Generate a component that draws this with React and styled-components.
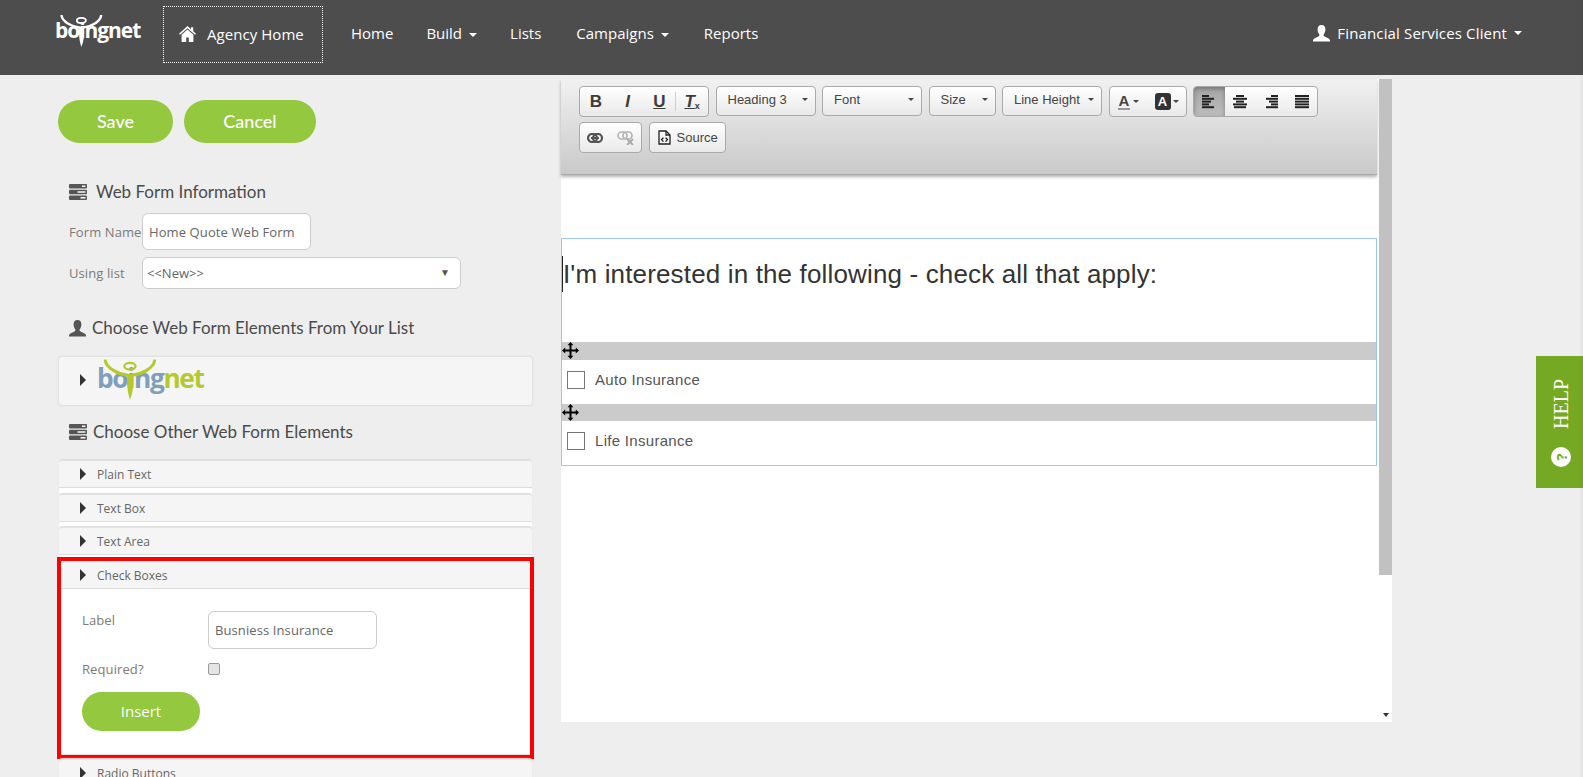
import React from 'react';
import styled, { createGlobalStyle } from 'styled-components';

const GlobalStyle = createGlobalStyle`
  html, body {
    margin: 0;
    padding: 0;
    height: 100%;
    overflow: hidden;
    background: #eeeeee;
    font-family: "Open Sans", "Liberation Sans", sans-serif;
    color: #555;
  }
  * { box-sizing: border-box; }
`;

const HomeIcon = () => (
  <svg width="17" height="16" viewBox="0 0 17 16" fill="#fff">
    <path d="M8.5 0 L12 3.2 V1.2 H14.2 V5.2 L17 7.8 L16 8.8 L8.5 2.2 L1 8.8 L0 7.8 Z" />
    <path d="M8.5 3.6 L14.4 8.8 V16 H9.8 V11.4 H7.2 V16 H2.6 V8.8 Z" />
  </svg>
);

const UserIcon = ({ color = '#fff', size = 17 }) => (
  <svg width={size} height={size} viewBox="0 0 17 17" fill={color}>
    <path d="M8.5 0 C11.2 0 12.5 2 12.4 4.8 C12.3 7 11.4 8.6 10.6 9.6 C10.4 10.6 10.8 11.2 12 11.8 C14.2 12.8 16.4 13.4 17 15.2 V16.4 H0 V15.2 C0.6 13.4 2.8 12.8 5 11.8 C6.2 11.2 6.6 10.6 6.4 9.6 C5.6 8.6 4.7 7 4.6 4.8 C4.5 2 5.8 0 8.5 0 Z" />
  </svg>
);

const ServerIcon = () => (
  <svg width="18" height="16" viewBox="0 0 18 16">
    <rect x="0" y="0" width="18" height="4.4" rx="1" fill="#555" />
    <rect x="0" y="5.8" width="18" height="4.4" rx="1" fill="#555" />
    <rect x="0" y="11.6" width="18" height="4.4" rx="1" fill="#555" />
    <rect x="13" y="1.4" width="3.4" height="1.6" fill="#eee" />
    <rect x="8.5" y="7.2" width="8" height="1.6" fill="#eee" />
    <rect x="11.5" y="13" width="5" height="1.6" fill="#eee" />
  </svg>
);

const MoveIcon = () => (
  <svg width="17" height="17" viewBox="0 0 17 17" fill="#000">
    <path d="M8.5 0 L11.4 3.2 H9.5 V7.5 H13.8 V5.6 L17 8.5 L13.8 11.4 V9.5 H9.5 V13.8 H11.4 L8.5 17 L5.6 13.8 H7.5 V9.5 H3.2 V11.4 L0 8.5 L3.2 5.6 V7.5 H7.5 V3.2 H5.6 Z" />
  </svg>
);

const SwooshIcon = ({ color }) => (
  <svg width="46" height="33" viewBox="0 0 56 40" fill="none">
    <path d="M2 1 C3 8 14 14 23 15" stroke={color} strokeWidth="3" strokeLinecap="round" />
    <path d="M50 1 C49 8 38 14 29 15" stroke={color} strokeWidth="3" strokeLinecap="round" />
    <ellipse cx="26" cy="6.5" rx="5.5" ry="3.2" stroke={color} strokeWidth="2.2" />
    <path d="M23.5 14 L29 14 C30 24 29 32 26 39 C23.5 32 22.5 22 23.5 14 Z" fill={color} />
  </svg>
);

const LinkIcon = ({ color }) => (
  <svg width="16" height="10" viewBox="0 0 16 10" fill="none" stroke={color} strokeWidth="2.2">
    <rect x="1" y="1" width="9" height="8" rx="4" />
    <rect x="6" y="1" width="9" height="8" rx="4" />
    <path d="M4 5 H12" />
  </svg>
);

const UnlinkIcon = () => (
  <svg width="17" height="14" viewBox="0 0 17 14" fill="none" stroke="#b4b4b4" strokeWidth="1.7">
    <rect x="1" y="1" width="9" height="7" rx="3.5" />
    <rect x="6" y="1" width="9" height="7" rx="3.5" />
    <path d="M10 8 L16 14 M16 8 L10 14" stroke="#a8a8a8" strokeWidth="1.8" />
  </svg>
);

const SourceIcon = () => (
  <svg width="13" height="15" viewBox="0 0 13 15" fill="none" stroke="#222" strokeWidth="1.3">
    <path d="M1 1 H8 L12 5 V14 H1 Z" />
    <path d="M8 1 V5 H12" />
    <path d="M5.4 7.6 L3.6 9.6 L5.4 11.6 M7.6 7.6 L9.4 9.6 L7.6 11.6" strokeWidth="1.4" />
  </svg>
);

const AlignIcon = ({ rows }) => (
  <svg width="14" height="14" viewBox="0 0 14 14" fill="#222">
    {rows.map(([x, w], i) => (
      <rect key={i} x={x} y={i * 2.8} width={w} height="2" />
    ))}
  </svg>
);

const Page = styled.div`
  height: 100vh;
  overflow: hidden;
  position: relative;

  &::after {
    content: '';
    position: absolute;
    top: 0;
    right: 0;
    bottom: 0;
    width: 4px;
    background: linear-gradient(to right, rgba(0, 0, 0, 0), rgba(0, 0, 0, 0.05));
  }
`;

const TopBar = styled.header`
  height: 75px;
  background: #4d4d4d;
  display: flex;
  align-items: flex-start;
  padding-left: 55px;
  color: #fff;
  font-size: 15px;
`;

const Logo = styled.div`
  position: relative;
  width: 86px;
  height: 47px;
  margin-top: 13px;
`;

const LogoWord = styled.div`
  position: absolute;
  left: 0;
  top: 2px;
  font: 700 21px/30px "Open Sans", sans-serif;
  letter-spacing: -1.05px;
  color: ${p => p.$color || '#fff'};
  white-space: nowrap;

  span {
    color: ${p => p.$accent || 'inherit'};
  }
`;

const LogoMark = styled.div`
  position: absolute;
  left: 5px;
  top: 2px;
`;

const AgencyHome = styled.a`
  width: 160px;
  height: 57px;
  margin: 6px 28px 0 22px;
  border: 1px dotted #fff;
  display: flex;
  align-items: center;
  padding: 0 0 1px 15px;
  gap: 11px;
  letter-spacing: 0.05px;
`;

const NavItem = styled.a`
  margin-top: 23px;
  line-height: 20px;
  margin-right: ${p => p.$gap}px;
  white-space: nowrap;
`;

const Caret = styled.i`
  display: inline-block;
  flex: none;
  width: 0;
  height: 0;
  margin-left: ${p => p.$gap ?? 7}px;
  vertical-align: middle;
  border-top: ${p => p.$size || 4}px solid ${p => p.$color || '#fff'};
  border-left: ${p => p.$size || 4}px solid transparent;
  border-right: ${p => p.$size || 4}px solid transparent;
`;

const UserMenu = styled.a`
  margin: 23px 61px 0 auto;
  line-height: 20px;
  display: flex;
  align-items: center;
  gap: 7px;
  letter-spacing: 0.15px;
`;

const Main = styled.main`
  display: flex;
  align-items: flex-start;
`;

const Sidebar = styled.aside`
  width: 561px;
  padding: 25px 29px 0 58px;
  flex: none;
`;

const ButtonRow = styled.div`
  display: flex;
  gap: 11px;
  margin-bottom: 38px;
`;

const PillButton = styled.button`
  width: ${p => p.$w}px;
  height: ${p => p.$h || 43}px;
  border: 0;
  border-radius: 22px;
  background: #93c83f;
  color: #fff;
  font: ${p => p.$small ? '500 15px "Open Sans"' : '500 18px Lato'}, sans-serif;
  padding: 0 0 1px;
`;

const SectionTitle = styled.h3`
  margin: 0;
  padding-left: ${p => p.$inset || 11}px;
  display: flex;
  align-items: center;
  gap: ${p => p.$gap || 6}px;
  font: 400 17px/22px Lato, sans-serif;
  color: #4a4a4a;
`;

const InfoRows = styled.div`
  padding: 10px 0 0 11px;
  display: grid;
  grid-template-columns: 73px 1fr;
  row-gap: 7px;
  align-items: center;
  margin-bottom: 28px;
`;

const FieldLabel = styled.label`
  font-size: 13px;
  color: #7b7b7b;
  white-space: nowrap;
  letter-spacing: 0.1px;
`;

const TextField = styled.div`
  width: ${p => p.$w}px;
  height: ${p => p.$h}px;
  background: #fff;
  border: 1px solid #ccc;
  border-radius: 6px;
  padding-left: 6px;
  display: flex;
  align-items: center;
  font-size: 13px;
  letter-spacing: 0.1px;
  color: #666;
`;

const SelectField = styled(TextField)`
  justify-content: space-between;
  padding: 0 10px 0 4px;
  letter-spacing: 0;
  color: #666;

  &::after {
    content: '▼';
    font-size: 10px;
    color: #555;
    margin-top: -3px;
  }
`;

const LogoPanel = styled.div`
  height: 48px;
  margin: 18px 0 16px 1px;
  width: 473px;
  background: #f5f5f5;
  border-radius: 3px;
  box-shadow: 0 0 2px 1px #ddd;
  display: flex;
  align-items: flex-start;
  padding-left: 21px;
`;

const Arrow = styled.i`
  display: block;
  flex: none;
  width: 0;
  height: 0;
  border-left: 6px solid #333;
  border-top: 6px solid transparent;
  border-bottom: 6px solid transparent;
`;

const PanelLogo = styled(Logo)`
  margin: 0 0 0 11px;
  transform: scale(1.25);
  transform-origin: 0 0;
`;

const LogoArrow = styled(Arrow)`
  margin-top: 17px;
`;

const Accordion = styled.div`
  width: 473px;
  margin: 17px 0 0 1px;
  background: #fff;
`;

const AccordionHead = styled.div`
  height: 28px;
  margin-bottom: ${p => p.$mb ?? 5}px;
  background: #f5f5f5;
  border-radius: 3px 3px 0 0;
  border-top: 1px solid #e2e2e2;
  border-bottom: 1px solid #ddd;
  box-shadow: 0 -1px 1px #ddd;
  display: flex;
  align-items: center;
  gap: 11px;
  padding-left: 21px;
  font-size: 12px;
  color: #666;
`;

const Highlight = styled.section`
  margin: 0 -2px;
  border: 4px solid #ff0000;
  background: #fff;
`;

const HighlightHead = styled(AccordionHead)`
  height: 28px;
  margin: 0;
  padding: 1px 0 0 19px;
  border-top: 0;
  box-shadow: none;
  border-radius: 0;
`;

const CheckForm = styled.div`
  padding: 22px 0 0 21px;
  height: 166px;
  display: grid;
  grid-template-columns: 126px 1fr;
  grid-template-rows: 38px auto auto;
  align-content: start;
  border-bottom: 1px solid #ddd;
`;

const CheckLabel = styled(FieldLabel)`
  align-self: ${p => p.$center ? 'center' : 'start'};
  line-height: 18px;
`;

const RequiredRow = styled.div`
  grid-column: 1 / -1;
  display: grid;
  grid-template-columns: 126px 1fr;
  align-items: center;
  margin: 11px 0 14px;
`;

const SmallCheck = styled.span`
  width: 12px;
  height: 12px;
  border: 1px solid #999;
  border-radius: 2px;
  background: #e4e4e4;
`;

const EditorColumn = styled.div`
  width: 831px;
  height: 643px;
  margin-top: 4px;
  position: relative;
  background: #fff;
  padding-right: 15px;
`;

const Toolbar = styled.div`
  height: 96px;
  padding: 7px 18px;
  background: linear-gradient(to bottom, #f1f1f1, #c9c9c9);
  border-bottom: 1px solid #aaa;
  box-shadow: 0 2px 3px rgba(0, 0, 0, 0.3);
  position: relative;
`;

const ToolRow = styled.div`
  display: flex;
  align-items: flex-start;
  gap: 6.5px;
  margin-bottom: 5px;
`;

const ToolGroup = styled.div`
  display: flex;
  height: 31px;
  width: ${p => p.$w}px;
  border: 1px solid #aaa;
  border-radius: 4px;
  background: linear-gradient(to bottom, #fff, #e9e9e9);
  overflow: hidden;
  align-items: center;
`;

const ToolCell = styled.span`
  flex: 1;
  align-self: stretch;
  display: flex;
  align-items: center;
  justify-content: center;
  color: #333;
  background: ${p => p.$active ? 'linear-gradient(to bottom, #a5a5a5, #bdbdbd)' : 'none'};
  box-shadow: ${p => p.$active ? 'inset 0 2px 4px rgba(0,0,0,0.3)' : 'none'};
`;

const FormatGlyph = styled.span`
  font: ${p => p.$italic ? 'italic ' : ''}700 17px/1 "Liberation Sans", sans-serif;
  text-decoration: ${p => p.$underline ? 'underline' : 'none'};
  color: #3c3c3c;

  sub {
    font-size: 9px;
    vertical-align: -2px;
    font-style: normal;
  }
`;

const Divider = styled.i`
  width: 1px;
  height: 19px;
  background: #ccc;
`;

const ToolSelect = styled.div`
  width: ${p => p.$w}px;
  height: 30px;
  border: 1px solid #aaa;
  border-radius: 4px;
  background: linear-gradient(to bottom, #fff, #e9e9e9);
  display: flex;
  align-items: center;
  justify-content: space-between;
  padding: 0 7px 3px 11px;
  font: 13px "Liberation Sans", sans-serif;
  color: #444;
  white-space: nowrap;
`;

const ColorA = styled.span`
  font: 700 15px/1 "Liberation Sans", sans-serif;
  color: #444;
  border-bottom: 2px solid #999;
  padding: 0 1px;
`;

const ColorB = styled.span`
  font: 700 13px/17px "Liberation Sans", sans-serif;
  color: #fff;
  background: #333;
  border-radius: 3px;
  width: 16px;
  text-align: center;
`;

const SourceButton = styled(ToolSelect)`
  justify-content: flex-start;
  height: 31px;
  gap: 6px;
  padding: 0 0 0 8px;
`;

const EditBox = styled.div`
  margin-top: 63px;
  height: 228px;
  border: 1px solid #9dc3fb;
  font: 26px "Liberation Sans", sans-serif;
  letter-spacing: 0.15px;
  color: #333;
`;

const Headline = styled.div`
  height: 103px;
  padding-top: 20px;
  line-height: 30px;
`;

const Caretted = styled.span`
  box-shadow: -1px 0 0 #222;
  margin-left: 1px;
  padding: 3px 0;
`;

const DragBar = styled.div`
  height: ${p => p.$h}px;
  background: #cbcbcb;
  display: flex;
  align-items: center;
  position: relative;
`;

const MoveHandle = styled.span`
  position: absolute;
  left: 0;
  top: 0;
  line-height: 0;
`;

const OptionRow = styled.div`
  height: ${p => p.$h}px;
  display: flex;
  align-items: center;
  gap: 10px;
  padding: 0 0 5px 5px;
  font: 15px "Liberation Sans", sans-serif;
  letter-spacing: 0.3px;
  color: #555;
`;

const Box = styled.span`
  width: 18px;
  height: 18px;
  border: 1px solid #777;
  background: #fff;
`;

const Scrollbar = styled.div`
  position: absolute;
  top: 0;
  right: 0;
  bottom: 0;
  width: 13px;
`;

const ScrollThumb = styled.div`
  height: 496px;
  background: #c1c1c1;
`;

const ScrollArrow = styled.i`
  position: absolute;
  bottom: 5px;
  left: 4px;
  width: 0;
  height: 0;
  border-top: 4px solid #333;
  border-left: 3px solid transparent;
  border-right: 3px solid transparent;
`;

const HelpTab = styled.div`
  position: absolute;
  right: 0;
  top: 356px;
  width: 47px;
  height: 132px;
  background: #76a923;
  display: flex;
  flex-direction: column;
  align-items: center;
  padding: 23px 0 0 3px;
  gap: 18px;
`;

const HelpText = styled.span`
  writing-mode: vertical-rl;
  transform: rotate(180deg);
  font: 20px/20px "Liberation Serif", serif;
  color: #fff;
`;

const HelpDot = styled.span`
  width: 20px;
  height: 20px;
  border-radius: 50%;
  background: #fff;
  color: #76a923;
  font: 700 15px/20px "Open Sans", sans-serif;
  text-align: center;
  transform: rotate(-90deg);
`;

const App = () => {
  return (
    <Page>
      <GlobalStyle />
      <TopBar>
        <Logo>
          <LogoWord>boingnet</LogoWord>
          <LogoMark>
            <SwooshIcon color="#fff" />
          </LogoMark>
        </Logo>
        <AgencyHome>
          <HomeIcon />
          Agency Home
        </AgencyHome>
        <NavItem $gap={33}>Home</NavItem>
        <NavItem $gap={33}>Build<Caret /></NavItem>
        <NavItem $gap={35}>Lists</NavItem>
        <NavItem $gap={35}>Campaigns<Caret /></NavItem>
        <NavItem $gap={0}>Reports</NavItem>
        <UserMenu>
          <UserIcon />
          Financial Services Client<Caret $gap={0} />
        </UserMenu>
      </TopBar>

      <Main>
        <Sidebar>
          <ButtonRow>
            <PillButton $w={115}>Save</PillButton>
            <PillButton $w={132}>Cancel</PillButton>
          </ButtonRow>

          <SectionTitle $gap={9}><ServerIcon />Web Form Information</SectionTitle>
          <InfoRows>
            <FieldLabel>Form Name</FieldLabel>
            <TextField $w={169} $h={37}>Home Quote Web Form</TextField>
            <FieldLabel>Using list</FieldLabel>
            <SelectField $w={319} $h={32}>&lt;&lt;New&gt;&gt;</SelectField>
          </InfoRows>

          <SectionTitle $gap={6}><UserIcon color="#555" />Choose Web Form Elements From Your List</SectionTitle>
          <LogoPanel>
            <LogoArrow />
            <PanelLogo>
              <LogoWord $color="#7f9fba" $accent="#b5c92f">boing<span>net</span></LogoWord>
              <LogoMark>
                <SwooshIcon color="#b5c92f" />
              </LogoMark>
            </PanelLogo>
          </LogoPanel>

          <SectionTitle $gap={6}><ServerIcon />Choose Other Web Form Elements</SectionTitle>
          <Accordion>
            <AccordionHead $mb={6}><Arrow />Plain Text</AccordionHead>
            <AccordionHead><Arrow />Text Box</AccordionHead>
            <AccordionHead $mb={2}><Arrow />Text Area</AccordionHead>
            <Highlight>
              <HighlightHead><Arrow />Check Boxes</HighlightHead>
              <CheckForm>
                <CheckLabel>Label</CheckLabel>
                <TextField $w={169} $h={38}>Busniess Insurance</TextField>
                <RequiredRow>
                  <CheckLabel $center>Required?</CheckLabel>
                  <SmallCheck />
                </RequiredRow>
                <PillButton $w={118} $h={39} $small>Insert</PillButton>
              </CheckForm>
            </Highlight>
            <AccordionHead><Arrow />Radio Buttons</AccordionHead>
          </Accordion>
        </Sidebar>

        <EditorColumn>
          <Toolbar>
            <ToolRow>
              <ToolGroup $w={130}>
                <ToolCell><FormatGlyph>B</FormatGlyph></ToolCell>
                <ToolCell><FormatGlyph $italic>I</FormatGlyph></ToolCell>
                <ToolCell><FormatGlyph $underline>U</FormatGlyph></ToolCell>
                <Divider />
                <ToolCell><FormatGlyph $italic $underline>T<sub>x</sub></FormatGlyph></ToolCell>
              </ToolGroup>
              <ToolSelect $w={100}>Heading 3<Caret $color="#444" $gap={0} $size={3} /></ToolSelect>
              <ToolSelect $w={100}>Font<Caret $color="#444" $gap={0} $size={3} /></ToolSelect>
              <ToolSelect $w={67}>Size<Caret $color="#444" $gap={0} $size={3} /></ToolSelect>
              <ToolSelect $w={100}>Line Height<Caret $color="#444" $gap={0} $size={3} /></ToolSelect>
              <ToolGroup $w={78}>
                <ToolCell><ColorA>A</ColorA><Caret $color="#444" $gap={3} $size={3} /></ToolCell>
                <ToolCell><ColorB>A</ColorB><Caret $color="#444" $gap={2} $size={3} /></ToolCell>
              </ToolGroup>
              <ToolGroup $w={125}>
                <ToolCell $active><AlignIcon rows={[[0, 7], [0, 12], [0, 9], [0, 7], [0, 12]]} /></ToolCell>
                <ToolCell><AlignIcon rows={[[3, 8], [0, 14], [3, 8], [0, 14], [1, 12]]} /></ToolCell>
                <ToolCell><AlignIcon rows={[[7, 7], [2, 12], [5, 9], [7, 7], [2, 12]]} /></ToolCell>
                <ToolCell><AlignIcon rows={[[0, 14], [0, 14], [0, 14], [0, 14], [0, 14]]} /></ToolCell>
              </ToolGroup>
            </ToolRow>
            <ToolRow>
              <ToolGroup $w={63}>
                <ToolCell><LinkIcon color="#555" /></ToolCell>
                <ToolCell><UnlinkIcon /></ToolCell>
              </ToolGroup>
              <SourceButton $w={77}><SourceIcon />Source</SourceButton>
            </ToolRow>
          </Toolbar>

          <EditBox>
            <Headline><Caretted>I'm interested in the following - check all that apply:</Caretted></Headline>
            <DragBar $h={18}><MoveHandle><MoveIcon /></MoveHandle></DragBar>
            <OptionRow $h={44}><Box />Auto Insurance</OptionRow>
            <DragBar $h={17}><MoveHandle><MoveIcon /></MoveHandle></DragBar>
            <OptionRow $h={44}><Box />Life Insurance</OptionRow>
          </EditBox>

          <Scrollbar>
            <ScrollThumb />
            <ScrollArrow />
          </Scrollbar>
        </EditorColumn>
      </Main>

      <HelpTab>
        <HelpText>HELP</HelpText>
        <HelpDot>?</HelpDot>
      </HelpTab>
    </Page>
  );
};

export default App;
